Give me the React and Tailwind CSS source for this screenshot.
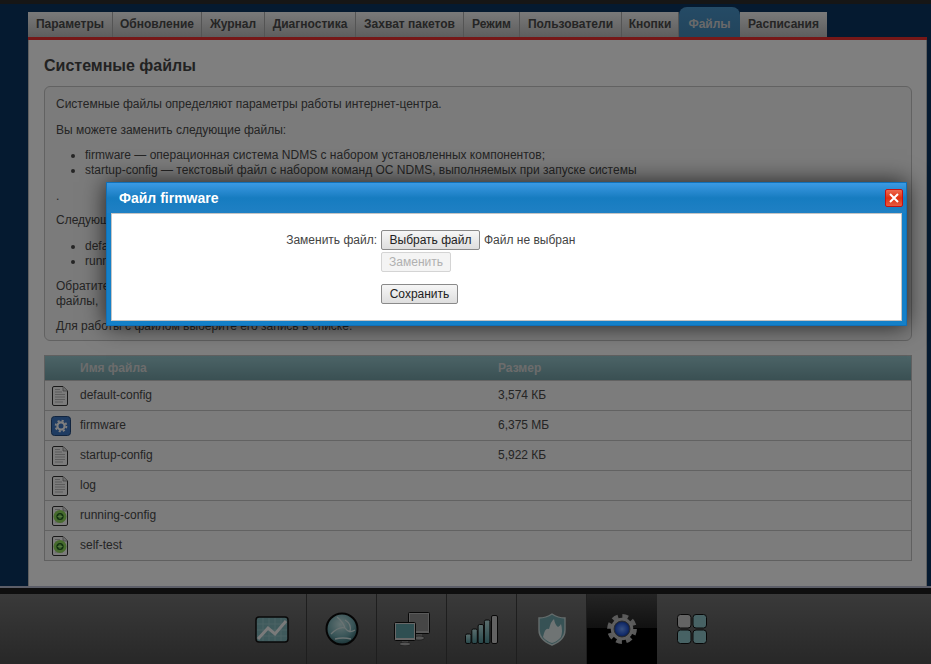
import React from "react";

const tabs = [
  { label: "Параметры", width: "w-[85px]" },
  { label: "Обновление", width: "w-[89px]" },
  { label: "Журнал", width: "w-[63px]" },
  { label: "Диагностика", width: "w-[91px]" },
  { label: "Захват пакетов", width: "w-[108px]" },
  { label: "Режим", width: "w-[56px]" },
  { label: "Пользователи", width: "w-[102px]" },
  { label: "Кнопки", width: "w-[57px]" },
  { label: "Файлы", width: "w-[61px]", active: true },
  { label: "Расписания", width: "w-[87px]" },
];

const files = [
  { name: "default-config", size: "3,574 КБ", icon: "doc" },
  { name: "firmware", size: "6,375 МБ", icon: "gear" },
  { name: "startup-config", size: "5,922 КБ", icon: "doc" },
  { name: "log", size: "", icon: "doc" },
  { name: "running-config", size: "", icon: "run" },
  { name: "self-test", size: "", icon: "run" },
];

const FileIcon = ({ type }) => {
  if (type === "gear") {
    return (
      <svg width="20" height="20" viewBox="0 0 20 20">
        <rect x="0.5" y="0.5" width="19" height="19" rx="3" fill="#3f78c4" stroke="#23497c" />
        <circle cx="10" cy="10" r="3.6" fill="none" stroke="#fff" strokeWidth="2.2" />
        <circle cx="10" cy="10" r="5.4" fill="none" stroke="#fff" strokeWidth="1.8" strokeDasharray="2.12 2.12" />
      </svg>
    );
  }
  return (
    <svg width="16" height="20" viewBox="0 0 16 20">
      <path d="M0.5 2 Q0.5 0.5 2 0.5 H11 L15.5 5 V18 Q15.5 19.5 14 19.5 H2 Q0.5 19.5 0.5 18 Z" fill="#f6f6f6" stroke="#333" />
      <path d="M11 0.5 V5 H15.5" fill="#ddd" stroke="#666" strokeWidth="0.6" />
      <path d="M3 3.5 H8 M3 6 H10 M3 8.5 H13 M3 11 H13 M3 13.5 H13 M3 16 H11" stroke="#aaa" strokeWidth="0.8" />
      {type === "run" && (
        <>
          <circle cx="8" cy="10.5" r="6.5" fill="#8fd85a" />
          <circle cx="8" cy="10.5" r="3.6" fill="#1d5a1d" />
          <path d="M8 8 V13 M5.5 10.5 H10.5 M6.3 8.8 L9.7 12.2 M9.7 8.8 L6.3 12.2" stroke="#a5ee78" strokeWidth="1" />
        </>
      )}
    </svg>
  );
};

const NavIcon = ({ name }) => {
  if (name === "chart") {
    return (
      <svg width="34" height="27" viewBox="0 0 34 27">
        <rect x="1" y="1" width="32" height="25" rx="3" fill="#7fb4b8" stroke="#111" strokeWidth="1.5" />
        <path d="M8 2 V25 M14 2 V25 M20 2 V25 M26 2 V25 M2 8 H32 M2 14 H32 M2 20 H32" stroke="#97c6c9" strokeWidth="1" />
        <path d="M3 23 L13 12 L20 18 L31 5" fill="none" stroke="#f4f4f4" strokeWidth="3" />
      </svg>
    );
  }
  if (name === "globe") {
    return (
      <svg width="34" height="34" viewBox="0 0 34 34">
        <defs>
          <radialGradient id="glb" cx="45%" cy="35%" r="70%">
            <stop offset="0%" stopColor="#c6e4e4" />
            <stop offset="60%" stopColor="#6fa8ae" />
            <stop offset="100%" stopColor="#2c5a60" />
          </radialGradient>
        </defs>
        <circle cx="17" cy="17" r="15.5" fill="url(#glb)" stroke="#0a0a0a" strokeWidth="2" />
        <path d="M12 5 Q18 10 20 16 Q24 22 30 18 M6 22 Q14 14 20 16 M10 27 Q18 25 26 27 M20 8 Q27 12 25 20" fill="none" stroke="#d5e6e6" strokeWidth="1.3" />
      </svg>
    );
  }
  if (name === "monitors") {
    return (
      <svg width="36" height="34" viewBox="0 0 36 34">
        <rect x="14.5" y="0.5" width="21" height="21" rx="1" fill="#b4b4b4" stroke="#111" />
        <rect x="16" y="2" width="18" height="17" fill="#8c8c8c" />
        <path d="M22 22 H28 V25 H22 Z" fill="#888" />
        <ellipse cx="25" cy="26" rx="5.5" ry="2" fill="#aaa" stroke="#111" strokeWidth="0.5" />
        <rect x="0.5" y="10.5" width="21" height="18" rx="1" fill="#d0d0d0" stroke="#111" />
        <rect x="2" y="12" width="18" height="14" fill="#5f9ea4" />
        <path d="M8 29 H14 V31 H8 Z" fill="#888" />
        <ellipse cx="11" cy="32" rx="5.5" ry="1.8" fill="#aaa" stroke="#111" strokeWidth="0.5" />
      </svg>
    );
  }
  if (name === "signal") {
    return (
      <svg width="33" height="29" viewBox="0 0 33 29">
        <defs>
          <linearGradient id="sig" x1="0" y1="0" x2="0" y2="1">
            <stop offset="0%" stopColor="#b6dcdc" />
            <stop offset="100%" stopColor="#4f9096" />
          </linearGradient>
        </defs>
        <rect x="0.5" y="19" width="5.5" height="9.5" rx="1.5" fill="url(#sig)" stroke="#111" />
        <rect x="6.8" y="14" width="5.5" height="14.5" rx="1.5" fill="url(#sig)" stroke="#111" />
        <rect x="13.1" y="9.5" width="5.5" height="19" rx="1.5" fill="url(#sig)" stroke="#111" />
        <rect x="19.4" y="5" width="5.5" height="23.5" rx="1.5" fill="url(#sig)" stroke="#111" />
        <rect x="26.5" y="0.5" width="6" height="28" rx="1.5" fill="#c4c4c4" stroke="#111" />
      </svg>
    );
  }
  if (name === "shield") {
    return (
      <svg width="28" height="33" viewBox="0 0 28 33">
        <path d="M14 1 Q20 5 27 5 V17 Q27 27 14 32 Q1 27 1 17 V5 Q8 5 14 1 Z" fill="#6fa4aa" stroke="#c8d8d8" strokeWidth="1.4" />
        <path d="M5 24 Q7 14 11 16 Q13 8 16 6 Q17 12 20 14 Q22 13 23 11 Q25 18 23 24 Q19 29 14 30 Q8 28 5 24 Z" fill="#dfe9e9" />
      </svg>
    );
  }
  if (name === "gear") {
    return (
      <svg width="30" height="30" viewBox="0 0 32 32">
        <defs>
          <radialGradient id="gr" cx="50%" cy="50%" r="50%">
            <stop offset="0%" stopColor="#6ea0ff" />
            <stop offset="70%" stopColor="#2a5cd8" />
            <stop offset="100%" stopColor="#163a90" />
          </radialGradient>
        </defs>
        <circle cx="16" cy="16" r="13.4" fill="none" stroke="#b4b4b4" strokeWidth="5" strokeDasharray="6 4.52" />
        <circle cx="16" cy="16" r="12" fill="#bcbcbc" />
        <circle cx="16" cy="16" r="8.5" fill="url(#gr)" stroke="#555" />
      </svg>
    );
  }
  return (
    <svg width="30" height="30" viewBox="0 0 30 30">
      <rect x="0.5" y="0.5" width="13.5" height="13.5" rx="3" fill="#c8c8c8" stroke="#111" />
      <rect x="16" y="0.5" width="13.5" height="13.5" rx="3" fill="#8fc4c8" stroke="#111" />
      <rect x="0.5" y="16" width="13.5" height="13.5" rx="3" fill="#8fc4c8" stroke="#111" />
      <rect x="16" y="16" width="13.5" height="13.5" rx="3" fill="#8fc4c8" stroke="#111" />
    </svg>
  );
};

const navItems = ["chart", "globe", "monitors", "signal", "shield", "gear", "apps"];

const btn = "h-5 rounded-[2px] border border-[#8a8a8a] bg-gradient-to-b from-[#f6f6f6] to-[#dedede] text-[12px] leading-none text-[#222]";

export default function App() {
  return (
    <div className="relative flex h-[664px] w-[931px] flex-col overflow-hidden bg-[#0a3560] font-['Liberation_Sans',Arial,sans-serif] text-[12px] leading-[15px] text-[#4a4a4a]">
      <div className="h-[4px] bg-[#2c2c2c]" />
      <div className="flex flex-1 flex-col pl-[28px] pr-[4px]">
        {/* tabs */}
        <div className="flex h-[33px] items-end">
          {tabs.map((t) =>
            t.active ? (
              <div key={t.label} className={`${t.width} flex h-[30px] items-start justify-center rounded-t-lg bg-gradient-to-b from-[#4a96cc] to-[#4489b8] pt-[10px] text-[12px] font-bold text-[#d4d4d4]`}>
                {t.label}
              </div>
            ) : (
              <div key={t.label} className={`${t.width} flex h-[25px] items-center justify-center border-r border-[#a8a8a8] bg-gradient-to-b from-[#f4f4f4] to-[#bcbcbc] text-[12px] font-bold text-[#4a4a4a] last:border-r-0`}>
                {t.label}
              </div>
            )
          )}
        </div>
        <div className="h-[3px] bg-[#ec3030]" />
        {/* panel */}
        <div className="flex-1 border-x border-[#c0c0c0] bg-[#ffffff] px-[15px]">
          <h1 className="mt-[17px] text-[16px] font-bold leading-[18px] text-[#444]">Системные файлы</h1>
          <div className="mt-[11px] h-[255px] w-[868px] rounded-md border border-[#c4c4c4] bg-[#f6f6f6] px-[11px] pt-[10px]">
            <p>Системные файлы определяют параметры работы интернет-центра.</p>
            <p className="mt-[11px]">Вы можете заменить следующие файлы:</p>
            <ul className="mt-[10px] list-disc pl-[29px]">
              <li>firmware — операционная система NDMS с набором установленных компонентов;</li>
              <li>startup-config — текстовый файл с набором команд ОС NDMS, выполняемых при запуске системы</li>
            </ul>
            <p className="mt-[11px]">.</p>
            <p className="mt-[9px]">Следующие файлы</p>
            <ul className="mt-[11px] list-disc pl-[29px]">
              <li>default-config</li>
              <li>running-config</li>
            </ul>
            <p className="mt-[10px]">Обратите внимание</p>
            <p>файлы,</p>
            <p className="mt-[10px]">Для работы с файлом выберите его запись в списке.</p>
          </div>
          {/* table */}
          <div className="mt-[14px] w-[868px] border border-[#c0c0c0] bg-[#f8f8f8]">
            <div className="grid h-[24px] grid-cols-[35px_418px_1fr] items-center bg-gradient-to-b from-[#98c8ce] to-[#74a0a6] text-[12px] font-bold text-[#d8d8d8]">
              <span />
              <span>Имя файла</span>
              <span>Размер</span>
            </div>
            {files.map((f) => (
              <div key={f.name} className="grid h-[30px] grid-cols-[35px_418px_1fr] items-center border-t border-[#c4c4c4] first:border-t-0">
                <span className={f.icon === "gear" ? "flex pl-[6px]" : "flex pl-[7px]"}>
                  <FileIcon type={f.icon} />
                </span>
                <span>{f.name}</span>
                <span>{f.size}</span>
              </div>
            ))}
          </div>
        </div>
      </div>
      {/* bottom bar */}
      <div className="h-[2px] bg-[#b8bcd0]" />
      <div className="h-[6px] bg-[#1c1c1c]" />
      <div className="flex h-[70px] justify-center bg-gradient-to-b from-[#747474] to-[#505050] pl-[33px]">
        {navItems.map((n) => (
          <div key={n} className={n === "gear" ? "flex w-[70px] items-center justify-center bg-[linear-gradient(#4a4a4a,#222_48%,#000_48%)]" : "flex w-[70px] items-center justify-center border-r border-[#3c3c3c] last:border-r-0"}>
            <NavIcon name={n} />
          </div>
        ))}
      </div>

      {/* dim layer */}
      <div className="absolute inset-0 bg-black/50" />

      {/* dialog */}
      <div className="absolute left-[106px] top-[182px] w-[801px] border border-[#1070b8] bg-[#1480c8] px-[4px] pb-[4px] shadow-[0_0_22px_rgba(0,0,0,0.75)]">
        <div className="-mx-[4px] flex h-[30px] items-center justify-between bg-gradient-to-b from-[#3a9ae4] via-[#167cc0] to-[#1f80c4] pl-[12px] pr-[3px]">
          <span className="text-[14px] font-bold text-white">Файл firmware</span>
          <button className="flex h-[18px] w-[18px] items-center justify-center rounded-[2px] border border-[#c81010] bg-[linear-gradient(#ee6a50,#e03010_50%,#e85a40)]">
            <svg width="12" height="12" viewBox="0 0 12 12">
              <path d="M2 2 L10 10 M10 2 L2 10" stroke="#fff" strokeWidth="2" />
            </svg>
          </button>
        </div>
        <div className="flex h-[108px] border border-[#c4c4c4] bg-white pl-[173px] pt-[16px] text-[#444]">
          <div className="flex w-[96px] shrink-0 justify-end pr-[4px] pt-[3px]">
            <span className="whitespace-nowrap">Заменить файл:</span>
          </div>
          <div className="flex flex-col items-start">
            <div className="flex items-center gap-[4px]">
              <button className={`${btn} w-[99px]`}>Выбрать файл</button>
              <span>Файл не выбран</span>
            </div>
            <button disabled className="mt-[2px] h-5 w-[70px] rounded-[2px] border border-[#d4d4d4] bg-[#f4f4f4] text-[12px] leading-none text-[#b0b0b0]">
              Заменить
            </button>
            <button className={`${btn} mt-[12px] w-[77px]`}>Сохранить</button>
          </div>
        </div>
      </div>
    </div>
  );
}
